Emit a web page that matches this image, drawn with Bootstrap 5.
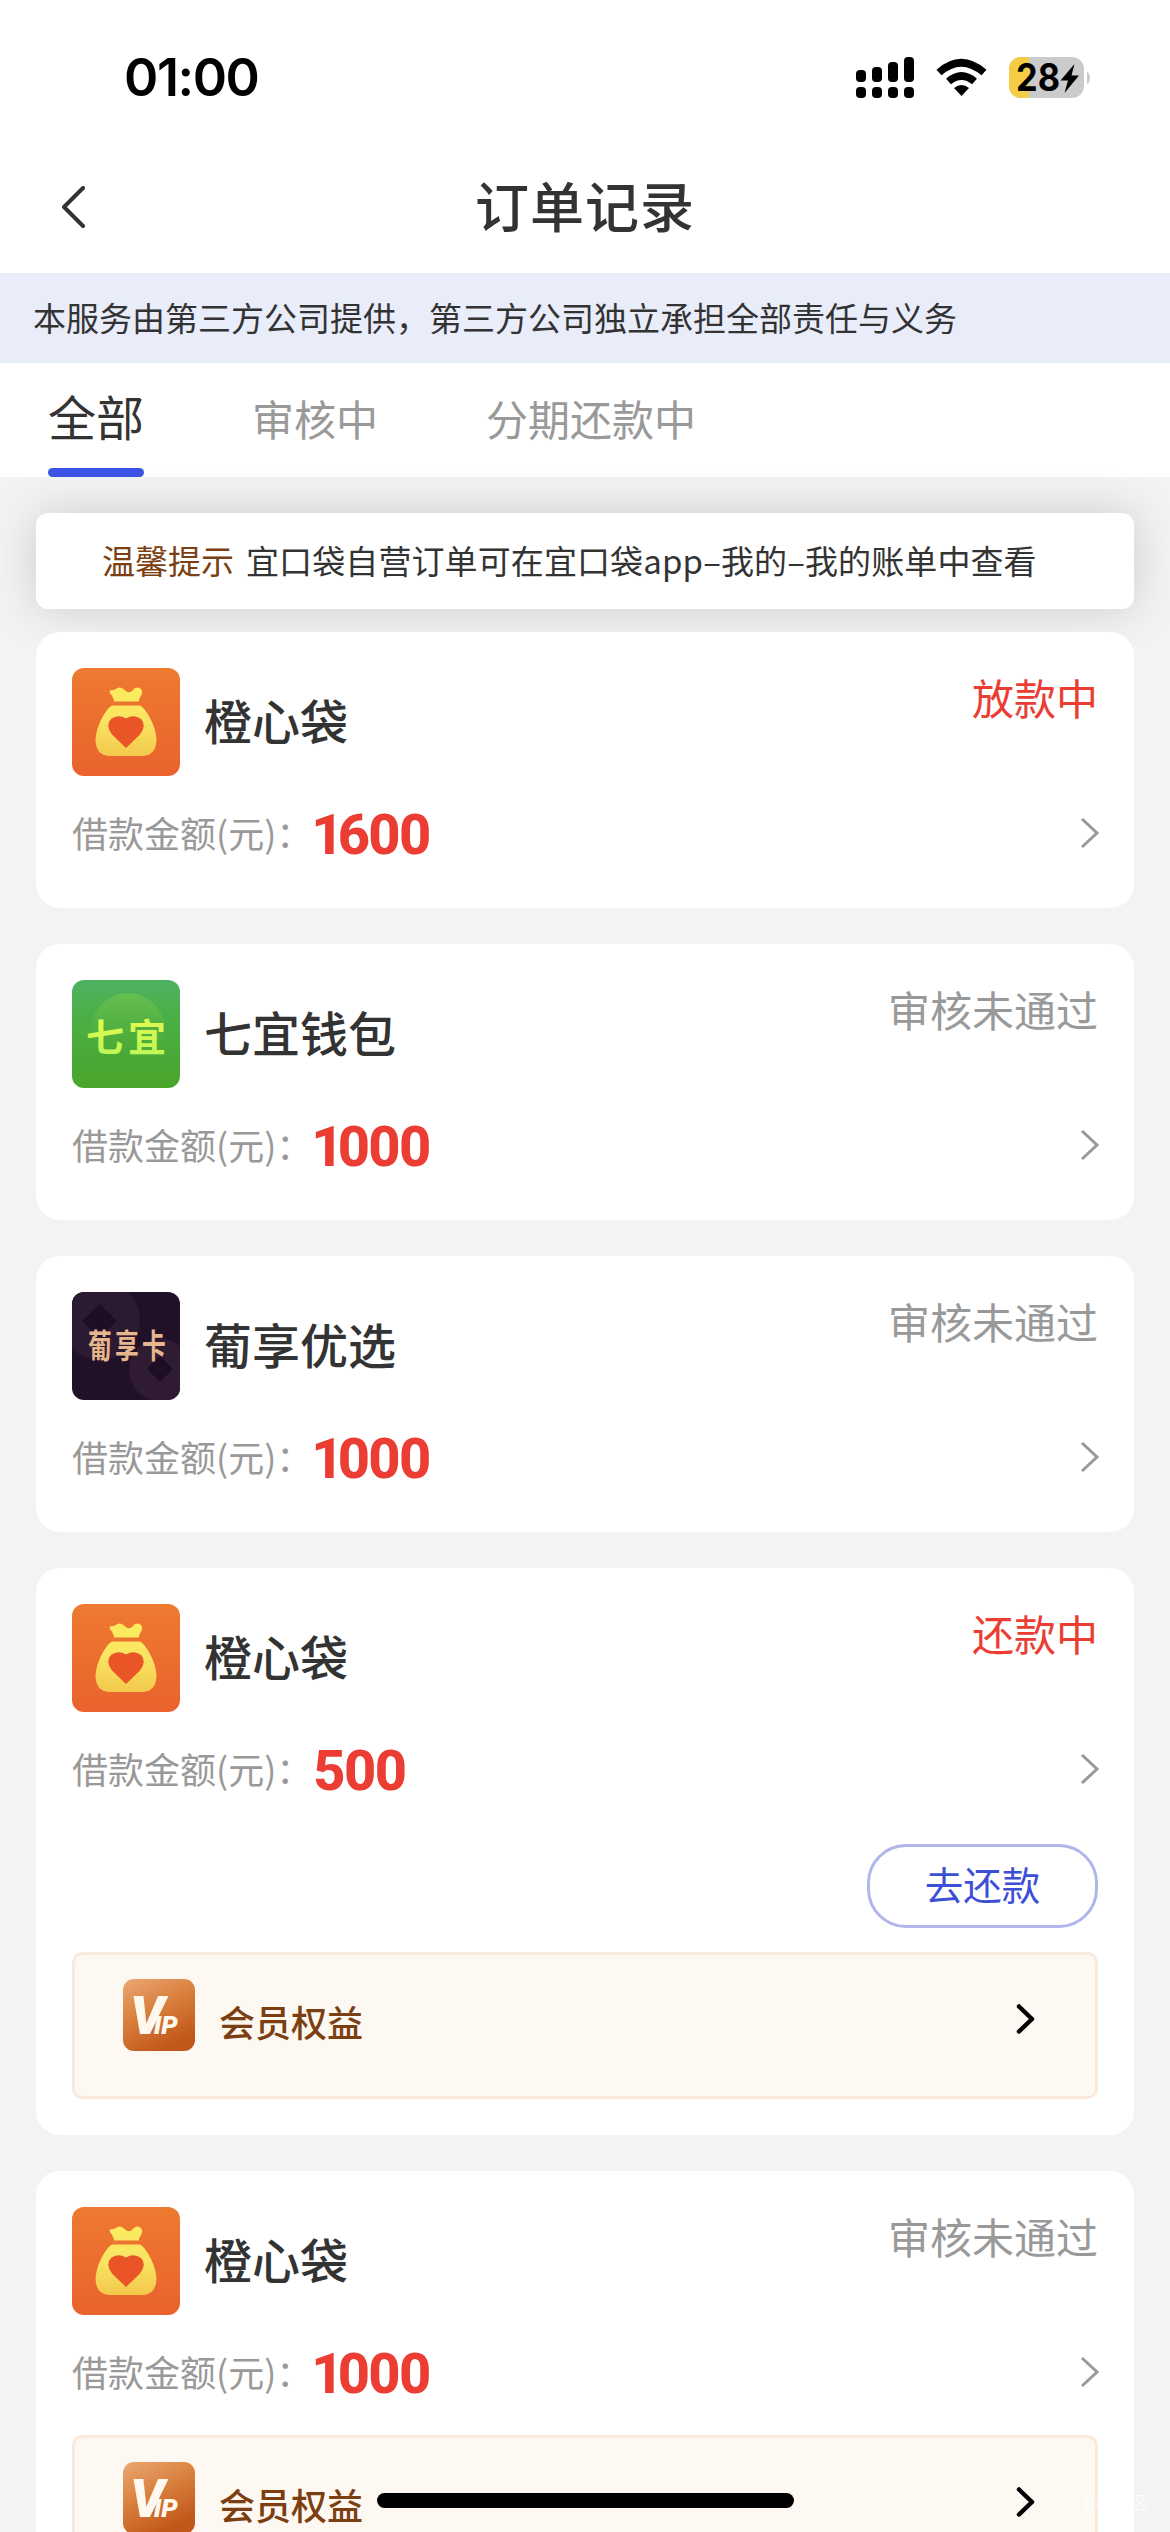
<!DOCTYPE html>
<html lang="zh-CN">
<head>
<meta charset="utf-8">
<meta name="viewport" content="width=device-width, initial-scale=1">
<title>订单记录</title>
<link rel="stylesheet" href="https://cdn.jsdelivr.net/npm/bootstrap@5.3.0/dist/css/bootstrap.min.css">
<style>
html,body{height:2532px;overflow:hidden}
body{background:#f3f3f3;color:#333;font-family:"Noto Sans CJK SC",sans-serif;line-height:1}
svg{display:block;flex:none}
.status-bar{height:144px;padding:12px 80px 0 124px}
.clock{font:600 52px/1 Inter,sans-serif;color:#000;letter-spacing:-1.4px}
.title-bar{height:129px;padding:0 61px 3px}
.title-text{font-size:54px;font-weight:500;letter-spacing:1px;line-height:60px;padding-bottom:4px}
.notice{height:90px;background:#e9ecf9;font-size:33px;padding:0 33px 2px}
.tabs-row{height:114px;padding:0 48px;gap:108px;color:#999;font-size:42px}
.tab-on{color:#333;font-size:48px;width:96px;height:114px}
.tab-on span{height:105px;line-height:104px}
.tab-on i{height:9px;border-radius:5px;background:#3b53e5}
.tab-off{line-height:110px}
.tip{height:96px;margin:36px 36px 23px;border-radius:12px;box-shadow:0 0 48px rgba(0,0,0,.16);font-size:33px;padding:0 66px 2px;white-space:nowrap}
.tip-msg{letter-spacing:.1px}
.brown{color:#7b3f11}
.list{padding:0 36px;gap:36px}
.order{border:0;border-radius:24px;padding:36px;background:#fff;color:#333}
.head{height:108px}
.name{font-size:48px;font-weight:500;margin-left:24px;line-height:102px}
.state{font-size:42px;line-height:57px;color:#999}
.red{color:#eb3d33}
.amount{height:60px;margin-top:27px;margin-bottom:9px;font-size:36px;color:#999}
.amount-label{padding-bottom:3px}
.num{font:800 56px/60px Roboto,sans-serif;color:#eb3d33;letter-spacing:-1.6px;margin-left:1px;padding-top:3px}
.num .one{letter-spacing:-6px;margin-left:-2px}
.next-icon{margin-right:-2px}
.pay,.pay:hover{width:231px;height:84px;border:3px solid #b0b6ea;border-radius:39px;color:#3c4fd6;font-size:38.5px;line-height:1;margin-top:36px;padding:0 0 5px}
.vip{height:147px;margin-top:24px;border:3px solid #fae9dd;border-radius:10px;background:#fdf8f1;padding:24px 60px 0 48px}
.vip-label{font-size:36px;font-weight:500;margin-left:24px;line-height:85px;height:72px}
.vip-next{margin-top:24px}
.side-space{width:26px}
.home{position:fixed;left:377px;top:2493px;width:417px;height:15px;border-radius:8px;background:#000}
.forum-tag{position:fixed;left:1078px;top:2493px;font-size:17.5px;line-height:18px;color:#fff;opacity:.8}
</style>
<script src="https://cdn.jsdelivr.net/npm/bootstrap@5.3.0/dist/js/bootstrap.bundle.min.js"></script>
</head>
<body>
<svg width="0" height="0" class="position-absolute">
<defs>
<linearGradient id="go" x1="0" y1="0" x2="0" y2="1"><stop offset="0" stop-color="#ee7a30"/><stop offset="1" stop-color="#ea622d"/></linearGradient>
<linearGradient id="gy" x1="0" y1="0" x2="0" y2="1"><stop offset="0" stop-color="#fbec5f"/><stop offset=".5" stop-color="#f9e463"/><stop offset="1" stop-color="#f3c84b"/></linearGradient>
<linearGradient id="gg" x1="0" y1="0" x2="0" y2="1"><stop offset="0" stop-color="#4fb263"/><stop offset=".4" stop-color="#4aae42"/><stop offset="1" stop-color="#49a52c"/></linearGradient>
<linearGradient id="gc" x1="0" y1="0" x2="0" y2="1"><stop offset="0" stop-color="#66c050"/><stop offset="1" stop-color="#49a52c" stop-opacity="0"/></linearGradient>
<linearGradient id="gt" x1="0" y1="0" x2="0" y2="1"><stop offset="0" stop-color="#edfb4b"/><stop offset="1" stop-color="#b8f558"/></linearGradient>
<linearGradient id="gv" x1="0" y1="0" x2=".5" y2="1"><stop offset="0" stop-color="#eaa873"/><stop offset=".5" stop-color="#d9803e"/><stop offset="1" stop-color="#c2571b"/></linearGradient>
<clipPath id="cl"><rect width="108" height="108" rx="12"/></clipPath>
</defs>
<symbol id="bag" viewBox="0 0 108 108"><rect width="108" height="108" rx="12" fill="url(#go)"/>
<path d="M42 32.500L40 27.500Q36.500 24 38 22.500Q42 22.500 45.500 20Q49 18.500 52 21.500Q57 26.500 60.500 22.500Q63.500 18.500 67.500 20Q71.500 22 69.500 27L67 31.500V33.500H42ZM40 37.500H68Q73 40 79 52Q84 62 84.500 72Q84 87 71 88H37Q24 87 23.500 72Q24 62 29 52Q35 40 40 37.500Z" fill="url(#gy)"/>
<path d="M54 80L40 66.500Q33 57 39 51Q46 46 54 50.500Q62 46 69 51Q75 57 68 66.500Z" fill="#ea5528"/></symbol>
<symbol id="qy" viewBox="0 0 108 108"><rect width="108" height="108" rx="12" fill="url(#gg)"/><circle cx="56" cy="50" r="37" fill="url(#gc)"/></symbol>
<symbol id="px" viewBox="0 0 108 108"><g clip-path="url(#cl)"><rect width="108" height="108" fill="#211128"/><circle cx="28" cy="28" r="40" fill="#2c1a33"/><path d="M28 12L45 29L28 46L10 29Z" fill="#1d0e26"/><circle cx="88" cy="78" r="31" fill="#2f1c33"/><path d="M88 64L101 77L88 90L75 77Z" fill="#1d0e26"/></g></symbol>
<symbol id="go-next" viewBox="0 0 20 32"><path d="M2 2L17 16L2 30" fill="none" stroke="#999" stroke-width="3"/></symbol>
<symbol id="vip-next" viewBox="0 0 20 32"><path d="M4 3.500L17 16L4 28.500" fill="none" stroke="#000" stroke-width="4.500" stroke-linecap="round" stroke-linejoin="round"/></symbol>
</svg>

<header class="bg-white">
<div class="status-bar d-flex align-items-center justify-content-between">
<div class="clock">01:00</div>
<svg width="236" height="46" viewBox="854 55 236 46">
<g fill="#000"><rect x="856" y="70" width="10" height="12" rx="4"/><rect x="872" y="67" width="10" height="15" rx="4"/><rect x="888" y="62" width="10" height="20" rx="4"/><rect x="904" y="57" width="10" height="25" rx="4"/><rect x="856" y="87" width="10" height="11" rx="4"/><rect x="872" y="87" width="10" height="11" rx="4"/><rect x="888" y="87" width="10" height="11" rx="4"/><rect x="904" y="87" width="10" height="11" rx="4"/></g>
<g fill="none" stroke="#000" stroke-width="7.500"><path d="M939 72.500Q961 53 984 72.500"/><path d="M948.500 81.500Q961.500 70.500 974.500 81.500"/></g><path d="M954 88Q961.500 82 969 88L961.500 96Z"/>
<clipPath id="bt"><rect x="1009" y="57" width="75" height="41" rx="12"/></clipPath><g clip-path="url(#bt)"><rect x="1009" y="57" width="75" height="41" fill="#cbcbcb"/><rect x="1009" y="57" width="20" height="41" fill="#f5cc45"/></g>
<path d="M1087 72Q1090 73 1090 78Q1090 83 1087 84Z" fill="#cbcbcb"/>
<text x="1016" y="91" font-family="Inter" font-weight="700" font-size="38" textLength="44" lengthAdjust="spacingAndGlyphs">28</text><path d="M1074.500 64L1060.500 80.500H1068L1064.500 93L1079 75.500H1071.500Z"/></svg>
</div>
<div class="title-bar d-flex align-items-center justify-content-between">
<svg width="26" height="42" viewBox="0 0 26 42"><path d="M22 2L3 21L22 40" fill="none" stroke="#333" stroke-width="4" stroke-linecap="round" stroke-linejoin="round"/></svg>
<h1 class="title-text m-0">订单记录</h1><span class="side-space"></span>
</div>
<div class="notice d-flex align-items-center">本服务由第三方公司提供，第三方公司独立承担全部责任与义务</div>
<nav class="tabs-row d-flex">
<div class="tab-on d-flex flex-column"><span>全部</span><i></i></div><div class="tab-off">审核中</div><div class="tab-off">分期还款中</div>
</nav>
</header>

<div class="tip bg-white d-flex align-items-center"><span class="brown">温馨提示</span><span class="tip-msg ms-2 ps-1">宜口袋自营订单可在宜口袋app–我的–我的账单中查看</span></div>

<main class="list d-flex flex-column">
<section class="card order">
<div class="head d-flex"><svg width="108" height="108"><use href="#bag"/></svg><div class="name">橙心袋</div><div class="state red ms-auto">放款中</div></div>
<div class="amount d-flex align-items-center"><span class="amount-label">借款金额(元)：</span><b class="num"><span class="one">1</span>600</b><svg class="next-icon ms-auto" width="20" height="32"><use href="#go-next"/></svg></div>
</section>
<section class="card order">
<div class="head d-flex"><svg width="108" height="108"><use href="#qy"/><text x="14" y="71" font-size="38" font-weight="700" textLength="80" fill="url(#gt)">七宜</text></svg><div class="name">七宜钱包</div><div class="state ms-auto">审核未通过</div></div>
<div class="amount d-flex align-items-center"><span class="amount-label">借款金额(元)：</span><b class="num"><span class="one">1</span>000</b><svg class="next-icon ms-auto" width="20" height="32"><use href="#go-next"/></svg></div>
</section>
<section class="card order">
<div class="head d-flex"><svg width="108" height="108"><use href="#px"/><text transform="translate(16 66) scale(.72 1)" font-size="33" font-weight="700" textLength="108" fill="#e8b68c">葡享卡</text></svg><div class="name">葡享优选</div><div class="state ms-auto">审核未通过</div></div>
<div class="amount d-flex align-items-center"><span class="amount-label">借款金额(元)：</span><b class="num"><span class="one">1</span>000</b><svg class="next-icon ms-auto" width="20" height="32"><use href="#go-next"/></svg></div>
</section>
<section class="card order">
<div class="head d-flex"><svg width="108" height="108"><use href="#bag"/></svg><div class="name">橙心袋</div><div class="state red ms-auto">还款中</div></div>
<div class="amount d-flex align-items-center"><span class="amount-label">借款金额(元)：</span><b class="num">500</b><svg class="next-icon ms-auto" width="20" height="32"><use href="#go-next"/></svg></div>
<button class="btn pay align-self-end">去还款</button>
<div class="vip d-flex"><svg width="72" height="72"><rect width="72" height="72" rx="11" fill="url(#gv)"/><text x="7" y="55" fill="#fff8ef" font-family="Roboto" font-weight="900" font-style="italic" font-size="54">V<tspan dx="-11" font-size="26">IP</tspan></text></svg><span class="vip-label brown">会员权益</span><svg class="vip-next ms-auto" width="20" height="32"><use href="#vip-next"/></svg></div>
</section>
<section class="card order">
<div class="head d-flex"><svg width="108" height="108"><use href="#bag"/></svg><div class="name">橙心袋</div><div class="state ms-auto">审核未通过</div></div>
<div class="amount d-flex align-items-center"><span class="amount-label">借款金额(元)：</span><b class="num"><span class="one">1</span>000</b><svg class="next-icon ms-auto" width="20" height="32"><use href="#go-next"/></svg></div>
<div class="vip d-flex"><svg width="72" height="72"><rect width="72" height="72" rx="11" fill="url(#gv)"/><text x="7" y="55" fill="#fff8ef" font-family="Roboto" font-weight="900" font-style="italic" font-size="54">V<tspan dx="-11" font-size="26">IP</tspan></text></svg><span class="vip-label brown">会员权益</span><svg class="vip-next ms-auto" width="20" height="32"><use href="#vip-next"/></svg></div>
</section>
</main>
<div class="home"></div>
<div class="forum-tag">卡农社区</div>
</body>
</html>
